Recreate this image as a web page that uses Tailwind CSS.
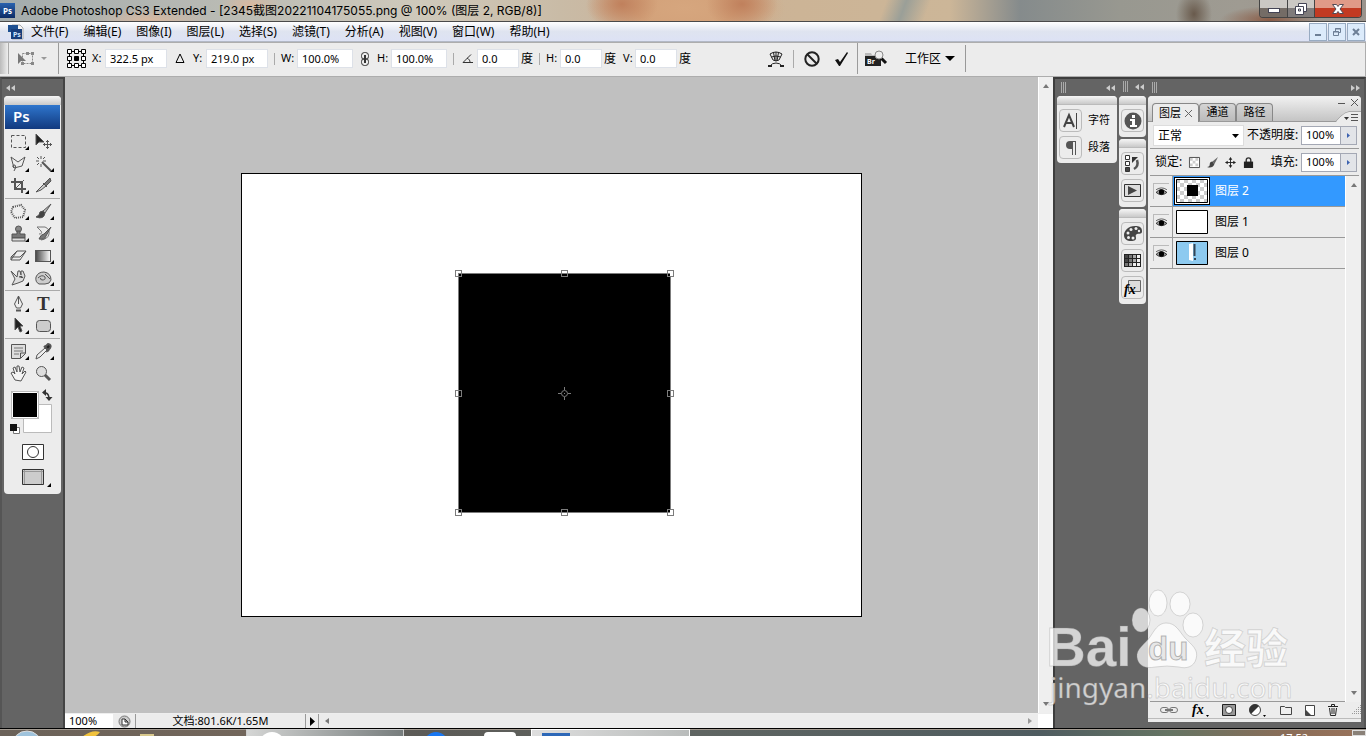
<!DOCTYPE html>
<html lang="zh-CN">
<head>
  <meta charset="UTF-8" />
  <meta name="viewport" content="width=device-width, initial-scale=1.0"/>
  <title>Adobe Photoshop CS3 Extended</title>
  <script src="https://cdn.jsdelivr.net/npm/@tailwindcss/browser@4"></script>
  <style>
    body {
      font-family: 'Noto Sans', 'Noto Sans CJK SC', sans-serif;
    }

    h1 {
      font-family: Inter, 'Noto Sans CJK SC', sans-serif;
    }

    svg {
      flex-shrink: 0;
      overflow: visible;
    }

    .titlebar {
      background:
        radial-gradient(ellipse 36px 26px at 622px 4px, #c0805c, transparent),
        radial-gradient(ellipse 36px 26px at 742px 4px, #c0805c, transparent),
        radial-gradient(ellipse 100px 40px at 685px 8px, #d6a67e, #d3a27a 50%, transparent),
        radial-gradient(ellipse 60px 12px at 150px 20px, #d9b9a0, transparent),
        radial-gradient(ellipse 30px 12px at 250px 4px, #d8b8a0, transparent),
        radial-gradient(ellipse 18px 24px at 1194px 14px, #695a4c, transparent),
        radial-gradient(ellipse 50px 14px at 1270px 20px, #8a5c46, transparent),
        linear-gradient(110deg, transparent 833px, #9a9f98 852px, transparent 875px),
        linear-gradient(to right, #a3acad 0, #b7b9b3 200px, #cfc9bb 420px, #c9bba6 560px, #cbb298 680px, #ccb496 800px, #ccb698 950px, #858b8c 1020px, #989890 1120px, #9f9b92 1240px, #9a938c 100%);
    }

    .taskbar {
      background: linear-gradient(to right, #6b6259 0, #72665b 240px, #5c5b57 420px, #5f6562 700px, #4f5c60 1040px, #657463 1170px, #8b6d58 1290px, #99735b 100%);
    }

    .panel-grip {
      background: linear-gradient(#f6f6f6, #c9c9c9);
    }
  </style>
</head>
<body class="h-screen overflow-hidden flex flex-col bg-[#646464] text-black text-xs select-none">

  <!-- Title bar -->
  <header class="titlebar h-[22px] shrink-0 flex items-start justify-between border-b border-[#4a4a4a]">
    <div class="flex items-center gap-1.5 h-[21px]">
      <span class="w-[15px] h-[15px] flex items-center justify-center bg-gradient-to-b from-[#2a62ae] to-[#0c2c66] text-white text-[8px] font-bold leading-none">Ps</span>
      <h1 class="text-xs leading-[21px] whitespace-nowrap">Adobe Photoshop CS3 Extended - [2345截图20221104175055.png @ 100% (图层 2, RGB/8)]</h1>
    </div>
    <div class="flex h-[18px] mr-1 border border-t-0 border-[#444] rounded-b overflow-hidden divide-x divide-[#444]">
      <button aria-label="最小化" class="w-7 flex items-center justify-center bg-gradient-to-b from-[#cbc8c4] from-50% to-[#746c66] to-50%">
        <svg width="12" height="5" viewBox="0 0 12 5" class="mt-1"><rect x=".5" y=".5" width="11" height="4" fill="#fff" stroke="#445"/></svg>
      </button>
      <button aria-label="还原" class="w-[27px] flex items-center justify-center bg-gradient-to-b from-[#cbc8c4] from-50% to-[#7f7b7b] to-50%">
        <svg width="12" height="12" viewBox="0 0 12 12" fill="#fff" stroke="#445"><path d="M3.500.5h8v8h-8z"/><path d="M.5 3.500h8v8h-8zM3.500 6h2v2h-2z" fill-rule="evenodd"/></svg>
      </button>
      <button aria-label="关闭" class="w-[46px] flex items-center justify-center bg-gradient-to-b from-[#e09a88] from-50% to-[#c23a22] to-50%">
        <svg width="12" height="10" viewBox="0 0 12 10"><path d="M.5.5h4L6 2.500 7.500.5h4L8 5l3.500 4.500h-4L6 7.500l-1.500 2h-4L4 5z" fill="#fff" stroke="#534a55"/></svg>
      </button>
    </div>
  </header>

  <!-- Menu bar -->
  <nav class="h-5 shrink-0 flex items-center justify-between border-b border-[#b3b9c6] bg-gradient-to-b from-white via-[#dfe4f0] to-[#dde2f5]">
    <div class="flex items-center gap-[15px] pl-2 leading-5 whitespace-nowrap">
      <svg width="16" height="16" viewBox="0 0 16 16" class="-mr-2">
        <path d="M4 1h8l3 3v11H4z" fill="#f4f4f4" stroke="#aaa"/><path d="M0 1h10v4H3v3H0z" fill="#1d4f91"/><path d="M3 5h11v10H3z" fill="#173e7c"/>
        <text x="5" y="13" font-size="7" font-weight="bold" fill="#cfe6ff">Ps</text>
      </svg>
      <a href="#">文件(F)</a>
      <a href="#">编辑(E)</a>
      <a href="#">图像(I)</a>
      <a href="#">图层(L)</a>
      <a href="#">选择(S)</a>
      <a href="#">滤镜(T)</a>
      <a href="#">分析(A)</a>
      <a href="#">视图(V)</a>
      <a href="#">窗口(W)</a>
      <a href="#">帮助(H)</a>
    </div>
    <div class="flex gap-px pr-px">
      <button aria-label="最小化文档" class="w-[18px] h-[18px] border border-[#98abc2] bg-[#dcebfb] flex items-center justify-center"><svg width="8" height="8" viewBox="0 0 8 8"><path d="M1 6h6v2H1z" fill="#6d7f96"/></svg></button>
      <button aria-label="还原文档" class="w-[18px] h-[18px] border border-[#98abc2] bg-[#dcebfb] flex items-center justify-center"><svg width="8" height="8" viewBox="0 0 8 8" fill="none" stroke="#6d7f96"><path d="M2.500 3V.5h5v4H6M2 1h6M.5 3.500h5v4h-5zM0 4h6"/></svg></button>
      <button aria-label="关闭文档" class="w-[18px] h-[18px] border border-[#98abc2] bg-[#dcebfb] flex items-center justify-center"><svg width="8" height="8" viewBox="0 0 8 8"><path d="M1 1l6 6M7 1L1 7" stroke="#6d7f96" stroke-width="2"/></svg></button>
    </div>
  </nav>

  <!-- Options bar -->
  <section class="h-[35px] shrink-0 flex items-center pb-0.5 border border-l-0 border-[#adadad] bg-[#ececec] text-[11px] whitespace-nowrap">
    <div class="w-[9px] self-stretch border-r border-[#aaa] bg-gradient-to-r from-[#bbb] to-[#eee]"></div>
    <div class="w-[50px] self-stretch flex items-center gap-1.5 pl-2 border-r border-[#9b9b9b]">
      <svg width="18" height="14" viewBox="0 0 18 14"><rect x="5.500" y="1.500" width="10" height="10" fill="none" stroke="#888" stroke-dasharray="2 1"/><path d="M14 0h3v3h-3zM14 10h3v3h-3zM9 0h3v3H9zM4 10h3v3H4z" fill="#888"/><path d="M1 1v11l3-3h5z" fill="#777"/></svg>
      <svg width="6" height="3" viewBox="0 0 6 3"><path d="M0 0h6L3 3z" fill="#999"/></svg>
    </div>
    <svg width="19" height="19" viewBox="0 0 19 19" class="ml-2" fill="#fff" stroke="#000">
      <path d="M3 2.500h13M3 16.500h13M2.500 3v13M16.500 3v13"/>
      <path d="M.5.500h4v4h-4zM7.500.500h4v4h-4zM14.500.500h4v4h-4zM.5 7.500h4v4h-4zM14.500 7.500h4v4h-4zM.5 14.500h4v4h-4zM7.500 14.500h4v4h-4zM14.500 14.500h4v4h-4z"/><path d="M7.500 7.500h4v4h-4z" fill="#000"/>
    </svg>
    <label for="pos-x" class="w-[13px] ml-1.5">X:</label>
    <input id="pos-x" value="322.5 px" class="w-[62px] h-[19px] px-1 bg-white border border-[#dde1e8]">
    <svg width="10" height="11" viewBox="0 0 10 11" class="ml-2"><path d="M5 1L9 9.500H1z" fill="none" stroke="#000"/></svg>
    <label for="pos-y" class="w-[13px] ml-2">Y:</label>
    <input id="pos-y" value="219.0 px" class="w-[62px] h-[19px] px-1 bg-white border border-[#dde1e8]">
    <div class="w-px h-3 ml-1.5 bg-[#aaa]"></div>
    <label for="size-w" class="w-4 ml-1.5">W:</label>
    <input id="size-w" value="100.0%" class="w-14 h-[19px] px-1 bg-white border border-[#dde1e8]">
    <svg width="8" height="14" viewBox="0 0 8 14" class="ml-2" fill="none" stroke="#333"><rect x=".5" y=".5" width="7" height="7" rx="3"/><rect x=".5" y="6.500" width="7" height="7" rx="3"/><path d="M4 3v8" stroke-width="2"/></svg>
    <label for="size-h" class="w-[14px] ml-2">H:</label>
    <input id="size-h" value="100.0%" class="w-14 h-[19px] px-1 bg-white border border-[#dde1e8]">
    <div class="w-px h-3 ml-1.5 bg-[#aaa]"></div>
    <label for="angle" aria-label="角度" class="ml-2"><svg width="11" height="10" viewBox="0 0 11 10" fill="none" stroke="#333"><path d="M9 .5L1 8.500h10M5 4c2 1 3 2.500 3 4"/></svg></label>
    <input id="angle" value="0.0" class="w-[42px] h-[19px] ml-1 px-1 bg-white border border-[#dde1e8]">
    <span class="ml-0.5 text-xs">度</span>
    <div class="w-px h-3 ml-1.5 bg-[#aaa]"></div>
    <label for="skew-h" class="w-[14px] ml-1.5">H:</label>
    <input id="skew-h" value="0.0" class="w-[42px] h-[19px] px-1 bg-white border border-[#dde1e8]">
    <span class="ml-0.5 text-xs">度</span>
    <label for="skew-v" class="w-3 ml-[7px]">V:</label>
    <input id="skew-v" value="0.0" class="w-[42px] h-[19px] px-1 bg-white border border-[#dde1e8]">
    <span class="ml-0.5 text-xs">度</span>
    <button aria-label="变形" class="ml-[76px]">
      <svg width="18" height="16" viewBox="0 0 18 16" fill="none" stroke="#222"><path d="M3 3q6-4 12 0l-3 6q-3 2-6 0zM4.500 6q4.500-2 9 0M9 1v9M6.500 1.500L8 10M11.500 1.500L10 10M3 15q2-3 6-3t6 3"/><path d="M1 14h4v2H1zM13 14h4v2h-4z" fill="#222" stroke="none"/></svg>
    </button>
    <div class="w-px h-[18px] ml-2 bg-[#aaa]"></div>
    <button aria-label="取消变换" class="ml-2.5"><svg width="16" height="16" viewBox="0 0 16 16" fill="none" stroke="#222" stroke-width="2"><circle cx="8" cy="8" r="6.700"/><path d="M3 3l10 10"/></svg></button>
    <button aria-label="进行变换" class="ml-3.5"><svg width="15" height="14" viewBox="0 0 15 14"><path d="M1 8l3-1 2 3 7-10 1 1-8 13H5z" fill="#111"/></svg></button>
    <div class="w-px self-stretch ml-2 bg-[#9b9b9b]"></div>
    <button aria-label="转到 Bridge" class="ml-1.5">
      <svg width="23" height="17" viewBox="0 0 23 17"><path d="M1 3h6l1 2h9v11H1z" fill="#bbb"/><path d="M1 6h16v10H1z" fill="#222"/><text x="3" y="14" font-size="7" font-weight="bold" fill="#fff">Br</text><path d="M17 8l5 5" stroke="#111" stroke-width="3"/><circle cx="15" cy="5" r="4" fill="#eee" stroke="#888"/></svg>
    </button>
    <button class="ml-[18px] flex items-center gap-1 text-xs">工作区
      <svg width="10" height="5" viewBox="0 0 10 5"><path d="M0 0h10L5 5z"/></svg>
    </button>
    <div class="w-px h-[27px] ml-2.5 bg-[#999]"></div>
  </section>

  <!-- Work area -->
  <main class="flex-1 min-h-0 flex">

    <!-- Toolbox -->
    <aside class="w-[65px] shrink-0 border-2 border-b-0 border-[#444] border-l-[#555] pl-0.5 pr-0.5">
      <div class="h-[17px] flex items-center pl-0.5">
        <svg width="10" height="6" viewBox="0 0 10 6" fill="#ccc"><path d="M4 0v6L0 3zM9 0v6L5 3z"/></svg>
      </div>
      <div class="w-[57px] bg-[#ececec] rounded">
        <div class="panel-grip h-[9px] rounded-t"></div>
        <div class="h-6 mx-px pl-2 text-[15px] leading-[23px] font-semibold text-white bg-gradient-to-b from-[#2f76cd] to-[#123a7f]">Ps</div>
        <div id="tools" class="pt-px px-px"></div>
        <svg width="57" height="110" viewBox="0 0 57 110" fill="none" role="img" aria-label="前景色和背景色">
          <path d="M19.500 20.500h28v28h-28z" fill="#fff" stroke="#bbb"/>
          <path d="M7.500 7.500h27v27h-27z" fill="#000" stroke="#bbb"/><path d="M8.500 8.500h25v25h-25z" stroke="#fff"/>
          <path d="M40 9h2q3 1 3 6" stroke="#333" stroke-width="1.500"/><path d="M42 5v7l-4-3.500zM41.500 13h7L45 17z" fill="#333"/>
          <path d="M9.500 43.500h6v6h-6z" fill="#fff" stroke="#777"/><path d="M6 40h7v7H6z" fill="#111"/>
          <path d="M18.500 60.500h21v15h-21z" fill="#fff" stroke="#333"/><circle cx="29" cy="68" r="5.500" stroke="#333"/>
          <path d="M18.500 85.500h21v15h-21z" fill="#ccc" stroke="#333"/><path d="M20.500 86v14M37.500 86v14M19 87.500h20" stroke="#999"/>
          <path d="M47 99v4h-4z" fill="#000"/>
        </svg>
      </div>
    </aside>

    <!-- Document window -->
    <section class="flex-1 min-w-0 flex flex-col bg-[#c0c0c0]">
      <div class="flex-1 min-h-0 flex">
        <div class="flex-1 min-w-0 flex items-center justify-center">
          <div class="relative w-[621px] h-[444px] shrink-0 bg-white border border-black">
            <svg width="213" height="240" viewBox="0 0 213 240" class="absolute left-[216px] top-[99px]" fill="none" stroke="#7c7c7c" shape-rendering="crispEdges">
              <path d="M.5.5h212v239H.5z" fill="#000"/>
              <path d="M-2.500-2.500h6v6h-6zM103.500-2.500h6v6h-6zM209.500-2.500h6v6h-6zM-2.500 117.500h6v6h-6zM209.500 117.500h6v6h-6zM-2.500 236.500h6v6h-6zM103.500 236.500h6v6h-6zM209.500 236.500h6v6h-6z"/>
              <path d="M-2-2h5v2H0v3h-2zM215-2h-5v2h2v3h3zM-2 242h5v-2H0v-3h-2zM215 242h-5v-2h2v-3h3zM104-2h5v2h-5zM104 240h5v2h-5zM-2 118h2v5h-2zM213 118h2v5h-2z" fill="#fff" stroke="none"/>
              <path d="M106.500 114v3M106.500 124v3M100 120.500h3M110 120.500h3"/><circle cx="106.500" cy="120.500" r="3" shape-rendering="auto"/><path d="M106 120.500h1"/>
            </svg>
          </div>
        </div>
        <div class="w-[15px] flex flex-col justify-between items-center py-[7px] bg-[#efefef] border-l border-white">
          <svg width="6" height="4" viewBox="0 0 6 4"><path d="M3 0l3 4H0z" fill="#777"/></svg>
          <svg width="6" height="4" viewBox="0 0 6 4"><path d="M3 4l3-4H0z" fill="#777"/></svg>
        </div>
      </div>
      <footer class="h-[15px] shrink-0 flex items-center border-t border-[#eee] bg-[#ececec] text-[11px] leading-4">
        <input aria-label="显示比例" value="100%" class="w-12 h-[14px] pl-1 bg-white">
        <button aria-label="Version Cue" class="w-[22px] flex justify-center"><svg width="13" height="13" viewBox="0 0 13 13"><circle cx="6.500" cy="6.500" r="5.500" fill="#ccc" stroke="#777"/><path d="M4 10V4h3l3 3v3zM7 4v3h3" fill="#fff" stroke="#333"/></svg></button>
        <div class="w-[171px] h-full border-x border-[#999] text-center leading-[14px]">文档:801.6K/1.65M</div>
        <button aria-label="状态栏选项" class="w-[13px] h-full flex items-center justify-center border-r border-[#999]"><svg width="5" height="9" viewBox="0 0 5 9"><path d="M0 0v9l5-4.500z"/></svg></button>
        <div class="flex-1 h-full flex items-center justify-between px-1.5 bg-[#ececec]">
          <svg width="4" height="6" viewBox="0 0 4 6"><path d="M4 0v6L0 3z" fill="#777"/></svg>
          <svg width="4" height="6" viewBox="0 0 4 6"><path d="M0 0v6l4-3z" fill="#999"/></svg>
        </div>
        <div class="w-[15px] h-full bg-white"></div>
      </footer>
    </section>

    <!-- Docked panels -->
    <aside class="w-[313px] shrink-0 flex gap-0.5 pl-0.5 pr-[3px] border-2 border-b-0 border-[#3d3d3d] border-r-[#555]">
      <div class="w-[60px]">
        <div class="h-[17px] flex items-center justify-between pl-1 pr-px">
          <svg width="6" height="11" viewBox="0 0 6 11" stroke="#aaa"><path d="M.5 0v11M2.500 0v11M4.500 0v11"/></svg>
          <svg width="10" height="6" viewBox="0 0 10 6" fill="#ccc"><path d="M4 0v6L0 3zM9 0v6L5 3z"/></svg>
        </div>
        <div class="bg-[#ececec] rounded pb-1">
          <div class="panel-grip h-[9px] rounded-t border-b border-[#bbb]"></div>
          <button class="flex items-center gap-1.5 mt-1 ml-0.5 text-[11px]">
            <span class="w-[23px] h-[23px] flex items-center justify-center border border-[#bbb] rounded-sm"><svg width="16" height="16" viewBox="0 0 16 16" fill="none" stroke="#444" stroke-width="2"><path d="M1 14L6 2l5 12M3 10h6"/><path d="M13.500 0v16" stroke-width="1"/></svg></span>字符
          </button>
          <button class="flex items-center gap-1.5 mt-1 ml-0.5 text-[11px]">
            <span class="w-[23px] h-[23px] flex items-center justify-center border border-[#bbb] rounded-sm"><svg width="12" height="14" viewBox="0 0 12 14"><path d="M5 0h6v14H10V1H8v13H7V8H5q-4 0-4-4t4-4z" fill="#555"/></svg></span>段落
          </button>
        </div>
      </div>

      <div class="w-[27px] flex flex-col gap-0.5">
        <div class="h-[15px] flex items-center justify-between pl-1 pr-px">
          <svg width="6" height="11" viewBox="0 0 6 11" stroke="#aaa"><path d="M.5 0v11M2.500 0v11M4.500 0v11"/></svg>
          <svg width="10" height="6" viewBox="0 0 10 6" fill="#ccc"><path d="M4 0v6L0 3zM9 0v6L5 3z"/></svg>
        </div>
        <div class="bg-[#ececec] rounded pb-[5px] flex flex-col items-center gap-1">
          <div class="panel-grip self-stretch h-[9px] rounded-t border-b border-[#bbb]"></div>
          <button aria-label="信息" class="w-[23px] h-[23px] flex items-center justify-center border border-[#bbb] rounded-sm"><svg width="18" height="18" viewBox="0 0 18 18"><circle cx="9" cy="9" r="8.500" fill="#555"/><path d="M8 3h3v3H8zM6 7h5v6h2v2H6v-2h2V9H6z" fill="#fff"/></svg></button>
        </div>
        <div class="bg-[#ececec] rounded pb-[5px] flex flex-col items-center gap-1">
          <div class="panel-grip self-stretch h-[9px] rounded-t border-b border-[#bbb]"></div>
          <button aria-label="历史记录" class="w-[23px] h-[23px] flex items-center justify-center border border-[#bbb] rounded-sm"><svg width="15" height="17" viewBox="0 0 15 17" fill="none" stroke="#333"><path d="M.5.5h4v4h-4zM.5 6.500h4v4h-4z" fill="#fff"/><path d="M.5 12.500h4v4h-4z" fill="#444"/><path d="M9 14q5-3 3-9" stroke="#555" stroke-width="2.500"/><path d="M7 2h6l-6 6z" fill="#333" stroke="none"/></svg></button>
          <button aria-label="动作" class="w-[23px] h-[23px] flex items-center justify-center border border-[#bbb] rounded-sm"><svg width="17" height="13" viewBox="0 0 17 13"><path d="M.5.500h16v12H.5z" fill="#ddd" stroke="#333"/><path d="M4 2v9l9-4.500z" fill="#444"/></svg></button>
        </div>
        <div class="bg-[#ececec] rounded pb-[5px] flex flex-col items-center gap-1">
          <div class="panel-grip self-stretch h-[9px] rounded-t border-b border-[#bbb]"></div>
          <button aria-label="颜色" class="w-[23px] h-[23px] flex items-center justify-center border border-[#bbb] rounded-sm"><svg width="18" height="15" viewBox="0 0 18 15"><path d="M11 0C4 0 0 5 0 9s3 6 7 6 5-1 5-3-1-3 1-4 5 1 5-3-3-5-7-5z" fill="#444"/><g fill="#eee"><circle cx="4" cy="7" r="1.500"/><circle cx="7" cy="3.500" r="1.500"/><circle cx="12" cy="2.500" r="1.500"/><circle cx="4.500" cy="11.500" r="1.500"/><circle cx="9" cy="12" r="1.500"/><circle cx="15" cy="5" r="1.200"/></g></svg></button>
          <button aria-label="色板" class="w-[23px] h-[23px] flex items-center justify-center border border-[#bbb] rounded-sm"><svg width="17" height="13" viewBox="0 0 17 13"><path d="M0 0h17v13H0z" fill="#222"/><path d="M1 1h3v3H1zM1 5h3v3H1z" fill="#444"/><path d="M5 1h3v3H5zM5 5h3v3H5zM1 9h3v3H1z" fill="#777"/><path d="M9 1h3v3H9zM9 5h3v3H9zM5 9h3v3H5z" fill="#aaa"/><path d="M13 1h3v3h-3zM13 5h3v3h-3zM9 9h3v3H9zM13 9h3v3h-3z" fill="#eee"/></svg></button>
          <button aria-label="样式" class="w-[23px] h-[23px] flex items-center justify-center border border-[#bbb] rounded-sm"><svg width="17" height="16" viewBox="0 0 17 16"><path d="M4.500.500h12v11h-12z" fill="#ddd" stroke="#666"/><text x="0" y="14" font-family="Liberation Serif" font-style="italic" font-weight="bold" font-size="14">fx</text></svg></button>
        </div>
      </div>

      <div class="flex-1 flex flex-col pb-1.5">
        <div class="h-[17px] shrink-0 flex items-center justify-between pl-1">
          <svg width="6" height="11" viewBox="0 0 6 11" stroke="#aaa"><path d="M.5 0v11M2.500 0v11M4.500 0v11"/></svg>
          <svg width="10" height="6" viewBox="0 0 10 6" fill="#ccc"><path d="M0 0v6l4-3zM5 0v6l4-3z"/></svg>
        </div>
        <div class="flex-1 flex flex-col bg-[#ececec] rounded-t">
          <div class="h-[26px] flex justify-between bg-gradient-to-b from-[#f2f2f2] to-[#c4c4c4] border-b border-[#999] rounded-t">
            <div class="flex items-end pl-1 text-[11px]">
              <button class="w-[47px] h-[19px] -mb-px flex items-center justify-center gap-1 bg-[#ececec] border border-b-0 border-[#888] rounded-t">图层
                <svg width="7" height="7" viewBox="0 0 7 7" stroke="#666"><path d="M0 0l7 7M7 0L0 7"/></svg>
              </button>
              <button class="w-[37px] h-[18px] flex items-center justify-center bg-gradient-to-b from-[#d4d4d4] to-[#bbb] border border-b-0 border-[#888] rounded-t">通道</button>
              <button class="w-[37px] h-[18px] flex items-center justify-center bg-gradient-to-b from-[#d4d4d4] to-[#bbb] border border-b-0 border-[#888] rounded-t">路径</button>
            </div>
            <svg width="27" height="26" viewBox="0 0 27 26" fill="none" stroke="#555"><path d="M27 15H15Q11 15 7 20l-5 6h25z" fill="#ececec" stroke="none"/><path d="M27 15.500H15Q11 16 7 20l-5 5" stroke="#aaa"/><path d="M4 7.500h7M17 3l7 7M24 3l-7 7M17 18.500h7M17 21.500h7M17 24.500h7"/><path d="M10 21h5l-2.500 3z" fill="#333" stroke="none"/></svg>
          </div>
          <div class="h-[27px] mx-0.5 flex items-center justify-end pr-0.5 gap-[3px] border-b border-[#999] whitespace-nowrap">
            <div class="relative w-[91px] h-[21px] bg-white border border-[#ddd]">
              <select aria-label="混合模式" class="appearance-none w-full h-full pl-1 pt-0.5 text-xs leading-4 bg-transparent"><option>正常</option></select>
              <svg width="7" height="4" viewBox="0 0 7 4" class="absolute right-1 top-2 pointer-events-none"><path d="M0 0h7L3.500 4z"/></svg>
            </div>
            <label for="opacity" class="w-[51px] text-xs">不透明度:</label>
            <div class="flex h-[19px] border border-[#a4a8b4]">
              <input id="opacity" value="100%" class="w-[38px] pl-1 text-[11px] bg-white">
              <button aria-label="不透明度滑块" class="w-4 flex items-center justify-center border-l border-[#a4a8b4] bg-[#e2e4e8]"><svg width="3" height="5" viewBox="0 0 3 5"><path d="M0 0v5l3-2.500z" fill="#3c62b0"/></svg></button>
            </div>
          </div>
          <div class="h-[27px] mx-0.5 flex items-center justify-between pl-[5px] pr-0.5 border-b border-[#999] whitespace-nowrap">
            <div class="flex items-center gap-[7px]">
              <span>锁定:</span>
              <button aria-label="锁定透明像素"><svg width="11" height="11" viewBox="0 0 12 12"><path d="M.5.500h11v11H.5z" fill="#fff" stroke="#444"/><path d="M1 1h3v3H1zM7 1h3v3H7zM4 4h3v3H4zM1 7h3v3H1zM7 7h3v3H7z" fill="#ccc"/></svg></button>
              <button aria-label="锁定图像像素"><svg width="11" height="11" viewBox="0 0 12 12"><path d="M12 0L6 5l2 3z" fill="#666"/><path d="M6 5q-3 0-3 3t-3 3q6 2 8-3z" fill="#444"/></svg></button>
              <button aria-label="锁定位置"><svg width="11" height="11" viewBox="0 0 12 12"><path d="M6 1v10M1 6h10" stroke="#222"/><path d="M6 0l2 3H4zM6 12l2-3H4zM0 6l3-2v4zM12 6L9 4v4z" fill="#222"/></svg></button>
              <button aria-label="锁定全部"><svg width="11" height="11" viewBox="0 0 12 12"><path d="M3.500 6V3.500q0-2.500 2.500-2.500t2.500 2.500V6" fill="none" stroke="#333" stroke-width="1.500"/><path d="M1 5h10v7H1z" fill="#222"/></svg></button>
            </div>
            <div class="flex items-center gap-[3px]">
              <label for="fill">填充:</label>
              <div class="flex h-[19px] border border-[#a4a8b4]">
                <input id="fill" value="100%" class="w-[38px] pl-1 text-[11px] bg-white">
                <button aria-label="填充滑块" class="w-4 flex items-center justify-center border-l border-[#a4a8b4] bg-[#e2e4e8]"><svg width="3" height="5" viewBox="0 0 3 5"><path d="M0 0v5l3-2.500z" fill="#3c62b0"/></svg></button>
              </div>
            </div>
          </div>
          <div class="flex-1 flex ml-0.5">
            <div id="layers" class="flex-1 border-b border-[#999]"></div>
            <div class="w-4 flex flex-col justify-between items-center py-[7px] bg-[#efefef] border-l border-white">
              <svg width="6" height="4" viewBox="0 0 6 4"><path d="M3 0l3 4H0z" fill="#777"/></svg>
              <svg width="6" height="4" viewBox="0 0 6 4"><path d="M3 4l3-4H0z" fill="#777"/></svg>
            </div>
          </div>
          <div class="h-[17px] flex items-center justify-between pl-3 border-b border-[#bbb]">
            <button aria-label="链接图层"><svg width="18" height="8" viewBox="0 0 18 8" fill="none" stroke="#777"><rect x=".5" y="1.500" width="8" height="5" rx="2.500"/><rect x="9.500" y="1.500" width="8" height="5" rx="2.500"/><path d="M5 4h8" stroke-width="2"/></svg></button>
            <button aria-label="图层样式"><svg width="18" height="14" viewBox="0 0 18 14"><text x="1" y="11" font-family="Liberation Serif" font-style="italic" font-weight="bold" font-size="14">fx</text><path d="M15 12h3l-1.500 2z"/></svg></button>
            <button aria-label="图层蒙版"><svg width="14" height="12" viewBox="0 0 14 12"><path d="M.5.500h13v11H.5z" fill="#999" stroke="#222"/><circle cx="7" cy="6" r="3.500" fill="#fff" stroke="#444"/></svg></button>
            <button aria-label="调整图层"><svg width="17" height="13" viewBox="0 0 17 13"><circle cx="6" cy="6" r="5.500" fill="#fff" stroke="#444"/><path d="M2 10A5.500 5.500 0 0 1 10 2z" fill="#333"/><path d="M14 11h3l-1.500 2z"/></svg></button>
            <button aria-label="新建组"><svg width="12" height="10" viewBox="0 0 12 10"><path d="M.5 1.500h4l1 1h6v7H.5z" fill="#eee" stroke="#444"/></svg></button>
            <button aria-label="新建图层"><svg width="10" height="11" viewBox="0 0 10 11"><path d="M.5.500h9v10h-9z" fill="#fff" stroke="#444"/><path d="M1 5l5 5H1z" fill="#444"/></svg></button>
            <button aria-label="删除图层"><svg width="10" height="12" viewBox="0 0 10 12" fill="none" stroke="#222"><path d="M0 2.500h10M3.500 2V.5h3V2M1.500 4l1 7.500h5l1-7.500M4 4v6M6 4v6"/></svg></button>
            <svg width="10" height="10" viewBox="0 0 10 10"><path d="M9.500 0v10M7.500 2v8M5.500 4v6M3.500 6v4M1.500 8v2" stroke="#999" stroke-dasharray="1 1"/></svg>
          </div>
          <div class="h-[3px]"></div>
        </div>
      </div>
    </aside>
  </main>

  <!-- Taskbar, only its top edge is visible -->
  <footer class="taskbar relative h-2 shrink-0 border-t border-black overflow-hidden flex">
    <div class="w-[246px] border-t border-[#a39b92] flex items-start gap-[38px] pl-3">
      <svg width="30" height="7" viewBox="0 0 30 7"><circle cx="15" cy="16" r="15" fill="#9fc3dc" stroke="#ddd"/></svg>
      <svg width="22" height="7" viewBox="0 0 22 7"><path d="M2 7q10-8 18-5-2 3-6 5z" fill="#f1c23c"/></svg>
      <svg width="16" height="7" viewBox="0 0 16 7"><path d="M0 4h14v3H0z" fill="#d8c88c"/></svg>
    </div>
    <div class="w-[158px] pl-3 border border-b-0 border-[#ccc] bg-gradient-to-r from-[#d5d6d5] to-[#777d7d]"><svg width="26" height="7" viewBox="0 0 26 7"><circle cx="13" cy="15" r="13" fill="#fff"/></svg></div>
    <div class="w-[127px] flex gap-9 pl-5 border-t border-[#a39b92]">
      <svg width="24" height="7" viewBox="0 0 24 7"><circle cx="12" cy="14" r="12" fill="#1877f2"/></svg>
      <svg width="32" height="7" viewBox="0 0 32 7"><rect y="2" width="32" height="12" rx="4" fill="#fff"/></svg>
    </div>
    <div class="w-[159px] pl-2.5 pt-[3px] border border-b-0 border-white bg-gradient-to-r from-[#dedede] to-[#b9bcbb]"><div class="w-7 h-2 bg-[#2d68b8]"></div></div>
    <div class="flex-1 flex justify-end gap-11 border-t border-[#a39b92]">
      <span class="pt-0.5 text-[11px] leading-3 text-white">17:52</span>
      <div class="w-3.5 border border-[#ddd] bg-[#8a8178]"></div>
    </div>
  </footer>

  <!-- Watermark -->
  <svg width="250" height="122" viewBox="0 0 250 122" class="absolute right-[70px] bottom-6 pointer-events-none" fill="#fff" fill-opacity=".72" stroke="#888" stroke-opacity=".3">
    <text x="0" y="76" font-family="Liberation Sans" font-weight="bold" font-size="55">Bai</text>
    <ellipse cx="95" cy="30" rx="9" ry="12"/><ellipse cx="112" cy="13" rx="9" ry="13"/><ellipse cx="134" cy="14" rx="10" ry="12"/><ellipse cx="147" cy="35" rx="10" ry="12"/>
    <path d="M120 33c10 0 13 8 19 15 7 7 14 12 11 21-2 8-10 10-17 8q-12-2-24 0c-9 2-17-1-18-10-1-8 8-13 13-20 4-6 8-14 16-14z"/>
    <text x="102" y="70" font-family="Liberation Sans" font-weight="bold" font-size="33" fill="#e0e0e0" stroke="#888" stroke-opacity=".6">du</text>
    <text x="158" y="74" font-family="Noto Sans CJK SC" font-weight="bold" font-size="42">经验</text>
    <text x="4" y="108" font-family="Noto Sans" font-size="28">jingyan.baidu.com</text>
  </svg>

  <script>
    // Toolbox: rows of two tools, a null draws the divider line
    const tools = [
      ["矩形选框", `<rect x="1.500" y="2.500" width="14" height="12" fill="none" stroke-dasharray="3 2"/>`, "移动", `<path d="M1 1v11l3-3h5z" fill="#222"/><path d="M12.500 7v9M8 11.500h9M11 8.500h3M11 14.500h3M9.500 10v3M15.500 10v3"/>`],
      ["套索", `<path d="M1 2l7 5 7-5-3 9-8 2zM4 13q-3-3 1-3 2 2-1 6" fill="none"/>`, "魔棒", `<path d="M6 1v3M6 9v3M1 6h3M8 6h3M2 2l2 2M10 2L8 4M2 10l2-2"/><path d="M7 7l9 9" stroke-width="2"/>`],
      ["裁剪", `<path d="M5 1v11h11M1 5h11v11" stroke-width="2" fill="none"/><path d="M5 12l9-9"/>`, "切片", `<path d="M9 7l6-6 1 3-5 5z" fill="#777"/><path d="M9 7l2 2-5 4-5 2z" fill="#ccc"/><path d="M8 6l4 4"/>`],
      null,
      ["修复", `<path d="M3 4l8-2 4 5-2 7-8 1-4-6z" fill="#eee" stroke-dasharray="1 1" stroke-width="2"/>`, "画笔", `<path d="M16 1L8 8l2 2z" fill="#bbb"/><path d="M8 8q-4 0-4 4l-3 2q8 3 9-4z" fill="#444"/>`],
      ["图章", `<circle cx="8.500" cy="4" r="3" fill="#888"/><path d="M7 6h3v3h5v4H2V9h5z" fill="#777"/><path d="M2 13h13v3H2z" fill="#ddd"/>`, "历史画笔", `<path d="M2 2h8q5 2 4 7t-8 6M2 2l4 4q2 3-2 3" fill="none" stroke="#777"/><path d="M16 2l-7 7q-3 0-5 5 6 1 7-3z" fill="#777"/>`],
      ["橡皮擦", `<path d="M7 4h9l-6 9H1z" fill="#eee"/><path d="M1 13v-3l6-6" fill="none"/><path d="M1 10h9l6-6" fill="none"/>`, "渐变", `<rect x=".5" y="3.500" width="15" height="11" fill="url(#fade)"/>`],
      ["涂抹", `<path d="M1 2l6 6 1-6h2l1 4V2h2l2 5-2 5-5 2-6 2 3-6z" fill="#ddd"/><path d="M9 8q3-2 4 1"/>`, "海绵", `<path d="M1 8q2-5 8-5 7 1 7 8-1 4-6 4H4q-4-2-3-7z" fill="#ccc"/><path d="M3 9q4-4 7-1 1 3-3 3-3-1-1-2M10 5l5 5" fill="none"/>`],
      null,
      ["钢笔", `<path d="M8.500 1l4 8-2 4h-4l-2-4z" fill="#eee"/><path d="M8.500 1v8"/><path d="M6 15.500h5" stroke-width="2"/>`, "文字", `<text x="2" y="15" font-family="Liberation Serif" font-weight="bold" font-size="19" stroke="none" fill="#333">T</text>`],
      ["路径选择", `<path d="M5 1v12l3-3 2 5 2-1-2-5h3z" fill="#222"/>`, "圆角矩形", `<rect x="1.500" y="3.500" width="14" height="11" rx="3" fill="#ccc"/>`],
      null,
      ["注释", `<path d="M1.500 1.500h14v9l-5 5h-9z" fill="#ddd"/><path d="M4 5h9M4 8h9M4 11h5" stroke="#777"/><path d="M10.500 15v-5h5" fill="none"/>`, "吸管", `<path d="M10 4l3-3q4 1 2 4l-3 3zM9 3l5 5" fill="#222" stroke-width="2"/><path d="M10 5l2 2-7 7-4 2 1-4z" fill="#eee"/>`],
      ["抓手", `<path d="M5 15L1 8l2-1 2 2-2-6 2-1 2 5V1h2l1 6 2-5 2 1-2 6 3-3 1 1-5 9z" fill="#f4f4f4"/>`, "缩放", `<path d="M10 10l5 5" stroke-width="3"/><circle cx="6.500" cy="6.500" r="5" fill="#ddd"/>`]
    ];

    // Tools without a flyout have no corner mark
    const noFlyout = ["移动", "抓手", "缩放"];

    function toolButton(name, shape) {
      const mark = noFlyout.includes(name) ? '' : '<path d="M19 13v4h-4z" fill="#000" stroke="none"/>';
      return `
        <button aria-label="${name}" class="w-[25px] h-[22px] flex items-center">
          <svg width="17" height="17" viewBox="0 0 17 17" stroke="#555">${shape}${mark}</svg>
        </button>
      `;
    }

    function renderTools() {
      document.getElementById("tools").innerHTML = `
        <svg width="0" height="0" class="absolute"><linearGradient id="fade"><stop stop-color="#444"/><stop offset="1" stop-color="#fff"/></linearGradient></svg>
      ` + tools.map(t => t
        ? `<div class="flex pl-[5px]">${toolButton(t[0], t[1])}${toolButton(t[2], t[3])}</div>`
        : '<hr class="border-[#aaa] mt-0.5 mb-px">'
      ).join('');
    }

    // Layers, top one first
    const layers = [
      { name: "图层 2", selected: true, thumb: `<rect width="32" height="24" fill="url(#checks)"/><path d="M11 6h11v11H11z" fill="#000"/>` },
      { name: "图层 1", selected: false, thumb: `<rect width="32" height="24" fill="#fff"/>` },
      { name: "图层 0", selected: false, thumb: `<rect width="32" height="24" fill="#8dcaf0"/><path d="M13 3l4-1v18l-4-1z" fill="#fff"/><path d="M17.500 3h2v12h-2zM18 17h2v2h-2z" fill="#345"/>` }
    ];

    function renderLayers() {
      document.getElementById("layers").innerHTML = `
        <svg width="0" height="0" class="absolute"><pattern id="checks" width="8" height="8" patternUnits="userSpaceOnUse"><path d="M0 0h8v8H0z" fill="#fff"/><path d="M0 0h4v4H0zM4 4h4v4H4z" fill="#ccc"/></pattern></svg>
      ` + layers.map(l => `
        <div class="h-[31px] flex border-b border-[#999]">
          <button aria-label="显示${l.name}" class="w-[23px] flex items-center justify-center border-r border-[#999]">
            <span class="w-4 h-4 flex items-center justify-center border-t border-l border-[#bbb]">
              <svg width="13" height="9" viewBox="0 0 14 10"><path d="M1 6q5-6 12 0-6 5-12 0z" fill="#aaa" stroke="#222"/><circle cx="7" cy="5.500" r="3"/><path d="M1 3q6-4 12 0" fill="none" stroke="#555"/></svg>
            </span>
          </button>
          <div class="flex-1 flex items-center gap-[5px] pl-px ${l.selected ? 'bg-[#3399ff] text-white' : ''}">
            <span class="p-px border ${l.selected ? 'border-black bg-white' : 'border-transparent'}">
              <svg width="32" height="24" viewBox="0 0 32 24" class="block">${l.thumb}<path d="M.5.500h31v23H.5z" fill="none" stroke="#000"/></svg>
            </span>
            <span>${l.name}</span>
          </div>
        </div>
      `).join('');
    }

    renderTools();
    renderLayers();
  </script>
</body>
</html>
